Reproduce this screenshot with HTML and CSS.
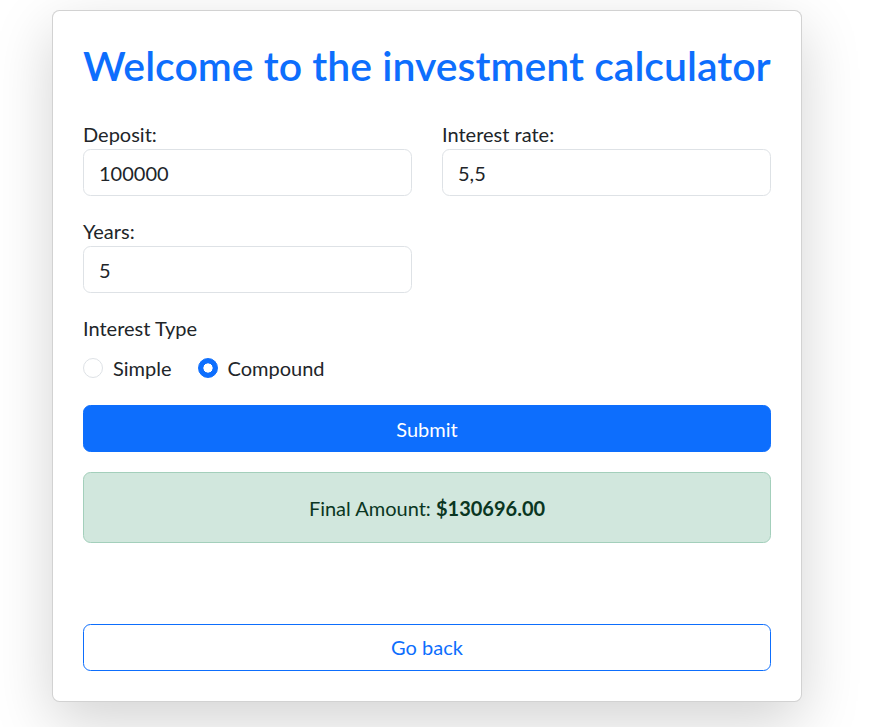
FILE: index.html
```html
<!DOCTYPE html>
<html lang="en">
<head>
<meta charset="utf-8">
<title>Investment calculator</title>
<link rel="stylesheet" href="styles.css">
</head>
<body>
<div class="page">
  <div class="card">
    <h1 class="title">Welcome to the investment calculator</h1>
    <form class="calc-form">
      <div class="grid">
        <div class="field">
          <label class="label" for="deposit">Deposit:</label>
          <input class="input" id="deposit" type="text" value="100000">
        </div>
        <div class="field">
          <label class="label" for="rate">Interest rate:</label>
          <input class="input" id="rate" type="text" value="5,5">
        </div>
        <div class="field">
          <label class="label" for="years">Years:</label>
          <input class="input" id="years" type="text" value="5">
        </div>
      </div>
      <div class="type-label">Interest Type</div>
      <div class="radios">
        <label class="radio-item"><input class="radio" type="radio" name="type" value="simple"><span>Simple</span></label>
        <label class="radio-item"><input class="radio" type="radio" name="type" value="compound" checked><span>Compound</span></label>
      </div>
      <button class="btn btn-primary" type="button">Submit</button>
      <div class="alert">Final Amount: <strong>$130696.00</strong></div>
    </form>
    <button class="btn btn-outline" type="button">Go back</button>
  </div>
</div>
</body>
</html>
```
FILE: styles.css
```css
* { box-sizing: border-box; }
html, body { margin: 0; padding: 0; background: #fff; }
body {
  font-family: "Lato", "Noto Sans", sans-serif;
  font-size: 20px;
  line-height: 1.5;
  color: #212529;
}
.page { padding: 10px 0 40px 52px; }
.card {
  width: 750px;
  border: 1px solid rgba(0,0,0,0.175);
  border-radius: 7.5px;
  background: #fff;
  padding: 30px;
  box-shadow: 0 20px 60px rgba(0,0,0,0.175);
}
.title {
  margin: 0 0 29px;
  font-size: 41px;
  line-height: 1.2;
  font-weight: 600;
  color: #0d6efd;
  white-space: nowrap;
}
.grid {
  display: grid;
  grid-template-columns: 1fr 1fr;
  column-gap: 30px;
}
.field { margin-bottom: 20px; }
.label { display: block; }
.input {
  display: block;
  width: 100%;
  font: inherit;
  color: #212529;
  padding: 7.5px 15px;
  border: 1px solid #dee2e6;
  border-radius: 7.5px;
  background: #fff;
  line-height: 1.5;
}
.type-label { margin-bottom: 10px; }
.radios { display: flex; gap: 26px; margin-bottom: 22px; }
.radio-item { display: flex; align-items: center; gap: 10px; }
.radio {
  appearance: none;
  -webkit-appearance: none;
  margin: 0;
  width: 20px;
  height: 20px;
  border: 1px solid #dee2e6;
  border-radius: 50%;
  background: #fff;
}
.radio:checked {
  border-color: #0d6efd;
  background: radial-gradient(circle closest-side, #fff 0 48%, #0d6efd 54%);
}
.btn {
  display: block;
  width: 100%;
  font: inherit;
  line-height: 1.5;
  padding: 7.5px 15px;
  border-radius: 7.5px;
  text-align: center;
  cursor: pointer;
}
.btn-primary { background: #0d6efd; border: 1px solid #0d6efd; color: #fff; }
.btn-outline { background: #fff; border: 1px solid #0d6efd; color: #0d6efd; margin-top: 80.5px; }
.alert {
  margin-top: 20px;
  padding: 19.5px 20px;
  background: #d1e7dd;
  border: 1px solid #a3cfbb;
  border-radius: 7.5px;
  color: #0a3622;
  text-align: center;
}
.alert strong { font-weight: 700; }
```
